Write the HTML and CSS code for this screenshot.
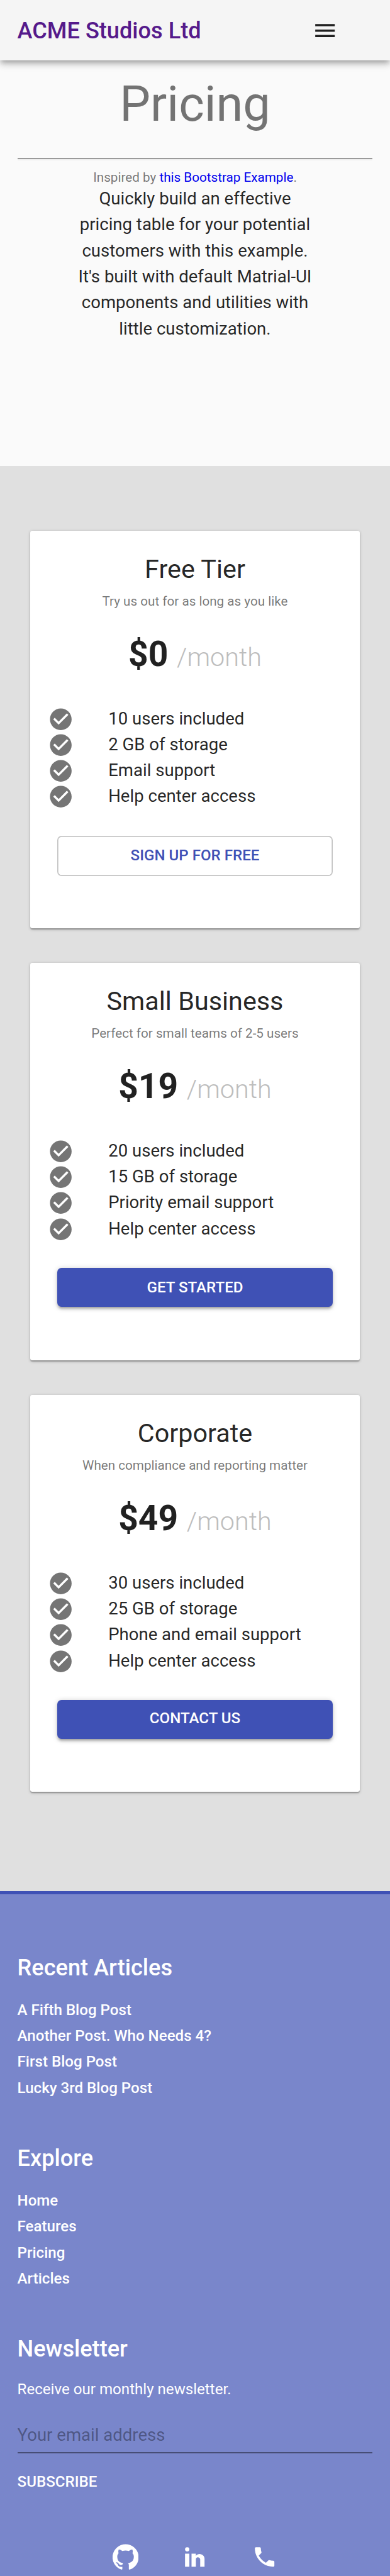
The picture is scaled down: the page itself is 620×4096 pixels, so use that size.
FILE: index.html
```html
<!DOCTYPE html>
<html lang="en">
<head>
<meta charset="utf-8">
<title>Pricing - ACME Studios Ltd</title>
<link rel="stylesheet" href="styles.css">
</head>
<body>
<svg class="sprite" aria-hidden="true">
  <symbol id="check" viewBox="0 0 24 24"><path d="M12 2C6.48 2 2 6.48 2 12s4.48 10 10 10 10-4.48 10-10S17.52 2 12 2zm-2 15l-5-5 1.41-1.41L10 14.17l7.59-7.59L19 8l-9 9z"/></symbol>
</svg>
<header class="app-bar">
  <a class="brand">ACME Studios Ltd</a>
  <svg class="icon menu" viewBox="0 0 24 24"><path d="M3 18h18v-2H3v2zm0-5h18v-2H3v2zm0-7v2h18V6H3z"/></svg>
</header>
<main>
  <section class="hero">
    <h1>Pricing</h1>
    <hr>
    <p class="credit">Inspired by <a class="link">this Bootstrap Example</a>.</p>
    <p class="intro">Quickly build an effective pricing table for your potential customers with this example. It's built with default Matrial-UI components and utilities with little customization.</p>
  </section>
  <section class="plans">
    <article class="card">
      <h2>Free Tier</h2>
      <p class="tagline">Try us out for as long as you like</p>
      <p class="price"><b>$0</b> <span class="per">/month</span></p>
      <ul class="features">
        <li><svg class="icon"><use href="#check"/></svg>10 users included</li>
        <li><svg class="icon"><use href="#check"/></svg>2 GB of storage</li>
        <li><svg class="icon"><use href="#check"/></svg>Email support</li>
        <li><svg class="icon"><use href="#check"/></svg>Help center access</li>
      </ul>
      <button class="button outlined">Sign up for free</button>
    </article>
    <article class="card">
      <h2>Small Business</h2>
      <p class="tagline">Perfect for small teams of 2-5 users</p>
      <p class="price"><b>$19</b> <span class="per">/month</span></p>
      <ul class="features">
        <li><svg class="icon"><use href="#check"/></svg>20 users included</li>
        <li><svg class="icon"><use href="#check"/></svg>15 GB of storage</li>
        <li><svg class="icon"><use href="#check"/></svg>Priority email support</li>
        <li><svg class="icon"><use href="#check"/></svg>Help center access</li>
      </ul>
      <button class="button contained">Get started</button>
    </article>
    <article class="card last">
      <h2>Corporate</h2>
      <p class="tagline">When compliance and reporting matter</p>
      <p class="price"><b>$49</b> <span class="per">/month</span></p>
      <ul class="features">
        <li><svg class="icon"><use href="#check"/></svg>30 users included</li>
        <li><svg class="icon"><use href="#check"/></svg>25 GB of storage</li>
        <li><svg class="icon"><use href="#check"/></svg>Phone and email support</li>
        <li><svg class="icon"><use href="#check"/></svg>Help center access</li>
      </ul>
      <button class="button contained">Contact us</button>
    </article>
  </section>
</main>
<footer class="footer">
  <section class="block">
    <h3>Recent Articles</h3>
    <ul class="links">
      <li>A Fifth Blog Post</li>
      <li>Another Post. Who Needs 4?</li>
      <li>First Blog Post</li>
      <li>Lucky 3rd Blog Post</li>
    </ul>
  </section>
  <section class="block">
    <h3>Explore</h3>
    <ul class="links">
      <li>Home</li>
      <li>Features</li>
      <li>Pricing</li>
      <li>Articles</li>
    </ul>
  </section>
  <section class="block">
    <h3>Newsletter</h3>
    <p class="note">Receive our monthly newsletter.</p>
    <input class="email" type="email" placeholder="Your email address">
    <button class="subscribe">Subscribe</button>
  </section>
  <nav class="social">
    <svg class="icon" viewBox="0 0 24 24"><path d="M12 .3a12 12 0 0 0-3.8 23.4c.6.1.8-.3.8-.6v-2c-3.3.7-4-1.6-4-1.6-.6-1.4-1.4-1.8-1.4-1.8-1-.7.1-.7.1-.7 1.2 0 1.9 1.2 1.9 1.2 1 1.8 2.8 1.3 3.5 1 0-.8.4-1.3.7-1.6-2.7-.3-5.5-1.3-5.5-6 0-1.2.5-2.3 1.3-3.1-.2-.4-.6-1.6 0-3.2 0 0 1-.3 3.4 1.2a11.5 11.5 0 0 1 6 0c2.3-1.5 3.3-1.2 3.3-1.2.6 1.6.2 2.8 0 3.2.9.8 1.3 1.9 1.3 3.2 0 4.6-2.8 5.6-5.5 5.9.5.4.9 1 .9 2.2v3.3c0 .3.1.7.8.6A12 12 0 0 0 12 .3"/></svg>
    <svg class="icon" viewBox="0 0 24 24"><path d="M21,21H17V14.25C17,13.19 15.81,12.31 14.75,12.31C13.69,12.31 13,13.19 13,14.25V21H9V9H13V11C13.66,9.93 15.36,9.24 16.5,9.24C19,9.24 21,11.28 21,13.75V21M7,21H3V9H7V21M5,3A2,2 0 0,1 7,5A2,2 0 0,1 5,7A2,2 0 0,1 3,5A2,2 0 0,1 5,3Z"/></svg>
    <svg class="icon" viewBox="0 0 24 24"><path d="M6.62 10.79c1.44 2.83 3.76 5.14 6.59 6.59l2.2-2.2c.27-.27.67-.36 1.02-.24 1.12.37 2.33.57 3.57.57.55 0 1 .45 1 1V20c0 .55-.45 1-1 1-9.39 0-17-7.61-17-17 0-.55.45-1 1-1h3.5c.55 0 1 .45 1 1 0 1.25.2 2.45.57 3.57.11.35.03.74-.25 1.02l-2.2 2.2z"/></svg>
  </nav>
</footer>
</body>
</html>
```

FILE: styles.css
```css
/* 1rem is ten layout units of a 360-unit-wide page */
html {
  font-size: 17.2222px;
}

* {
  box-sizing: border-box;
}

body {
  margin: 0;
  background: #fafafa;
  color: rgba(0, 0, 0, 0.87);
  font-family: Roboto, sans-serif;
  font-size: 1.6rem;
  line-height: 2.4rem;
  height: 4096px;
  overflow: hidden;
  display: flex;
  flex-direction: column;
}

h1, h2, h3, p, ul {
  margin: 0;
  padding: 0;
}

ul {
  list-style: none;
}

button, input {
  font-family: inherit;
  margin: 0;
}

.sprite {
  display: none;
}

.icon {
  display: block;
  flex: none;
  width: 2.4rem;
  height: 2.4rem;
  fill: currentColor;
}

.app-bar {
  position: relative;
  flex: none;
  display: flex;
  align-items: center;
  justify-content: space-between;
  height: 5.6rem;
  padding: 0 4.8rem 0 1.6rem;
  background: #f5f5f5;
  box-shadow: 0 0.2rem 0.4rem -0.1rem rgba(0, 0, 0, 0.2),
    0 0.4rem 0.5rem 0 rgba(0, 0, 0, 0.14),
    0 0.1rem 1rem 0 rgba(0, 0, 0, 0.12);
}

.brand {
  color: #551a8b;
  font-size: 2.1rem;
  font-weight: 500;
}

.hero {
  height: 37.4rem;
  padding: 1.66rem 1.6rem 0;
  text-align: center;
}

.hero h1 {
  height: 7.34rem;
  color: rgba(0, 0, 0, 0.54);
  font-size: 4.5rem;
  font-weight: 400;
  line-height: 4.8rem;
}

.hero hr {
  height: 0.2rem;
  margin: 0 0 0.8rem;
  border: 0;
  background: linear-gradient(#9a9a9a 50%, #eee 50%);
}

.credit {
  height: 1.54rem;
  color: rgba(0, 0, 0, 0.54);
  font-size: 1.2rem;
  line-height: 1.6rem;
}

.link {
  color: #0000ee;
}

.intro {
  width: 22.4rem;
  margin: 0 auto;
}

.plans {
  display: flex;
  flex-direction: column;
  gap: 3.2rem;
  height: 131.6rem;
  padding: 6rem 2.8rem 0;
  background: #e0e0e0;
}

.card {
  flex: none;
  height: 36.7rem;
  padding: 1.98rem 1.6rem 0;
  border-radius: 0.2rem;
  background: #fff;
  text-align: center;
  box-shadow: 0 0.1rem 0.3rem 0 rgba(0, 0, 0, 0.2),
    0 0.1rem 0.1rem 0 rgba(0, 0, 0, 0.14),
    0 0.2rem 0.1rem -0.1rem rgba(0, 0, 0, 0.12);
}

.card.last {
  height: 36.6rem;
}

.card h2 {
  font-size: 2.4rem;
  font-weight: 400;
  line-height: 3.25rem;
}

.tagline {
  color: rgba(0, 0, 0, 0.54);
  font-size: 1.2rem;
  line-height: 2.57rem;
}

.price {
  height: 4rem;
  margin: 1.6rem 0 2.8rem;
  font-size: 3.2rem;
  line-height: 4rem;
}

.price b {
  font-weight: 700;
}

.per {
  color: #bdbdbd;
  font-size: 2.4rem;
  font-weight: 300;
}

.features {
  margin-top: -0.02rem;
}

.price + .features {
  margin-top: -2.82rem;
  padding-top: 2.8rem;
}

.features li {
  display: flex;
  gap: 3.2rem;
  height: 2.4rem;
  line-height: 2.28rem;
  text-align: left;
}

.features .icon {
  color: #757575;
}

.button {
  display: block;
  width: 25.4rem;
  height: 3.6rem;
  margin: 2.4rem auto 0;
  padding: 0;
  border: 0;
  border-radius: 0.4rem;
  font-size: 1.4rem;
  font-weight: 500;
  line-height: 3.6rem;
  text-transform: uppercase;
}

.outlined {
  height: 3.7rem;
  background: none;
  box-shadow: inset 0 0 0 0.1rem rgba(0, 0, 0, 0.23);
  color: #3f51b5;
  line-height: 3.7rem;
}

.contained {
  background: #3f51b5;
  color: #fff;
  box-shadow: 0 0.1rem 0.5rem 0 rgba(0, 0, 0, 0.2),
    0 0.2rem 0.2rem 0 rgba(0, 0, 0, 0.14),
    0 0.3rem 0.1rem -0.2rem rgba(0, 0, 0, 0.12);
}

.last .contained {
  padding-bottom: 0.2rem;
  line-height: 3.4rem;
}

.footer {
  flex: 1;
  padding: 5.55rem 1.6rem 0;
  border-top: 0.3rem solid #3f51b5;
  background: #7986cb;
  color: #fff;
}

.block {
  height: 17.6rem;
}

.block h3 {
  margin-bottom: 1.5rem;
  font-size: 2.1rem;
  font-weight: 500;
  line-height: 2.46rem;
}

.links {
  font-size: 1.4rem;
  font-weight: 500;
}

.note {
  font-size: 1.4rem;
  line-height: 2.05rem;
}

.email {
  display: block;
  width: 100%;
  height: 3.3rem;
  margin-top: 1.56rem;
  padding: 0;
  border: 0;
  border-bottom: 2px solid rgba(0, 0, 0, 0.42);
  border-radius: 0;
  outline: 0;
  background: none;
  font-size: 1.6rem;
}

.email::placeholder {
  color: rgba(0, 0, 0, 0.37);
  opacity: 1;
}

.subscribe {
  display: block;
  height: 3.6rem;
  margin-top: 0.8rem;
  padding: 0;
  border: 0;
  background: none;
  color: #fff;
  font-size: 1.4rem;
  font-weight: 500;
  text-transform: uppercase;
}

.social {
  display: flex;
  justify-content: center;
  gap: 4rem;
  padding-top: 1.65rem;
}
```
